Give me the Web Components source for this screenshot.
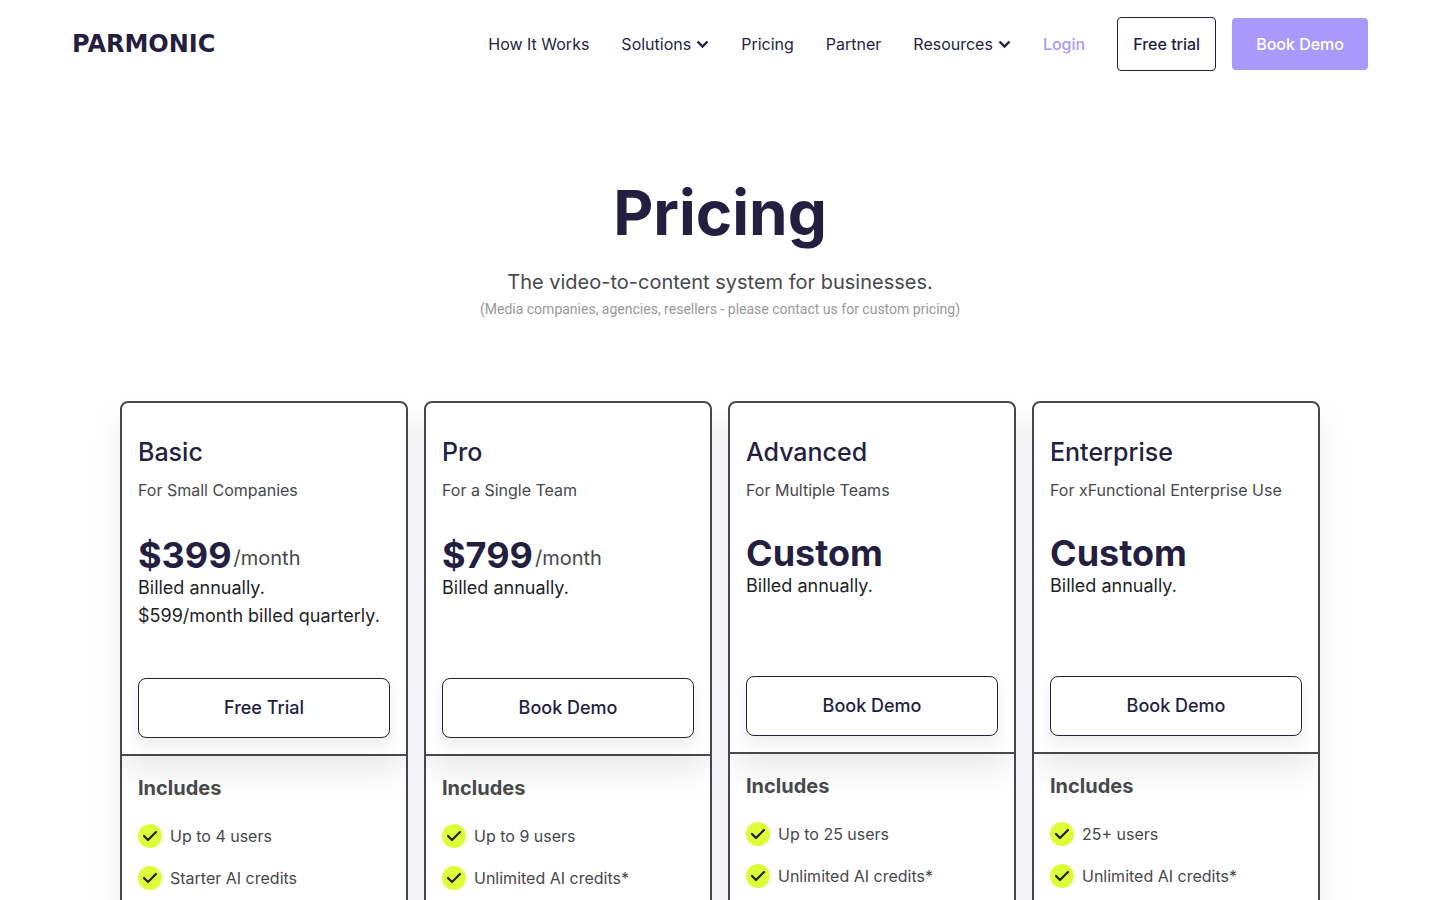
<!DOCTYPE html>
<html lang="en">
<head>
    <meta charset="utf-8">
    <meta name="viewport" content="width=device-width, initial-scale=1">
    <title>Parmonic - Pricing</title>
    <style>
        :root {
            --ink: #241f41;
            --text: #47484c;
            --dark: #1f1f26;
            --accent: #a899fb;
            --lime: #dcff37;
            --muted: #999999;
        }

        body {
            margin: 0;
            background-color: #ffffff;
            color: var(--text);
            font: 16px/24px Inter, "Liberation Sans", sans-serif;
        }
    </style>
</head>
<body>
    <site-header>
        <nav-link href="#how">How It Works</nav-link>
        <nav-menu>Solutions</nav-menu>
        <nav-link href="#pricing">Pricing</nav-link>
        <nav-link href="#partner">Partner</nav-link>
        <nav-menu>Resources</nav-menu>
        <nav-link href="#login" kind="login">Login</nav-link>
        <nav-link href="#trial" kind="outline" slot="actions">Free trial</nav-link>
        <nav-link href="#demo" kind="solid" slot="actions">Book Demo</nav-link>
    </site-header>

    <main>
        <page-intro>
            Pricing
            <span slot="lead">The video-to-content system for businesses.</span>
            <span slot="note">(Media companies, agencies, resellers - please contact us for custom pricing)</span>
        </page-intro>

        <plan-grid>
            <plan-card name="Basic" audience="For Small Companies" price="$399" period="/month" action="Free Trial">
                <span slot="billing">Billed annually.<br>$599/month billed quarterly.</span>
                <plan-feature>Up to 4 users</plan-feature>
                <plan-feature>Starter AI credits</plan-feature>
            </plan-card>
            <plan-card name="Pro" audience="For a Single Team" price="$799" period="/month" action="Book Demo">
                <span slot="billing">Billed annually.</span>
                <plan-feature>Up to 9 users</plan-feature>
                <plan-feature>Unlimited AI credits*</plan-feature>
            </plan-card>
            <plan-card name="Advanced" audience="For Multiple Teams" price="Custom" action="Book Demo">
                <span slot="billing">Billed annually.</span>
                <plan-feature>Up to 25 users</plan-feature>
                <plan-feature>Unlimited AI credits*</plan-feature>
            </plan-card>
            <plan-card name="Enterprise" audience="For xFunctional Enterprise Use" price="Custom" action="Book Demo">
                <span slot="billing">Billed annually.</span>
                <plan-feature>25+ users</plan-feature>
                <plan-feature>Unlimited AI credits*</plan-feature>
            </plan-card>
        </plan-grid>
    </main>

    <script>
        function attach(element, html) {
            const template = document.createElement('template');
            template.innerHTML = html;
            const root = element.attachShadow({ mode: "open" });
            root.appendChild(template.content.cloneNode(true));
            return root;
        }

        class SiteHeader extends HTMLElement {
            constructor() {
                super();
                attach(this, `
                    <style>
                        :host {
                            display: block;
                        }

                        header {
                            display: flex;
                            align-items: center;
                            justify-content: space-between;
                            padding: 17px 72px;
                        }

                        .logo {
                            color: var(--ink);
                            font: bold 24px/32px "DejaVu Sans", sans-serif;
                            text-decoration: none;
                        }

                        nav, .links, .actions {
                            display: flex;
                            align-items: center;
                        }

                        nav, .links {
                            gap: 32px;
                        }

                        .actions {
                            gap: 16px;
                        }
                    </style>
                    <header>
                        <a class="logo" href="#home">PARMONIC</a>
                        <nav>
                            <div class="links"><slot></slot></div>
                            <div class="actions"><slot name="actions"></slot></div>
                        </nav>
                    </header>
                `);
            }
        }

        class NavLink extends HTMLElement {
            constructor() {
                super();
                const root = attach(this, `
                    <style>
                        :host {
                            display: block;
                        }

                        a {
                            display: block;
                            color: var(--ink);
                            text-decoration: none;
                            white-space: nowrap;
                        }

                        :host([kind="login"]) a {
                            color: var(--accent);
                            font-weight: 500;
                        }

                        :host([kind="outline"]) a {
                            padding: 14px 15px;
                            border: 1px solid var(--ink);
                            border-radius: 4px;
                            font-weight: 500;
                        }

                        :host([kind="solid"]) a {
                            padding: 14px 24px;
                            border-radius: 4px;
                            background-color: var(--accent);
                            color: #ffffff;
                            font-weight: 500;
                        }
                    </style>
                    <a><slot></slot></a>
                `);
                root.querySelector('a').href = this.getAttribute('href');
            }
        }

        class NavMenu extends HTMLElement {
            constructor() {
                super();
                attach(this, `
                    <style>
                        :host {
                            display: block;
                        }

                        button {
                            display: flex;
                            align-items: center;
                            gap: 5px;
                            padding: 0;
                            border: 0;
                            background: none;
                            color: var(--ink);
                            font: inherit;
                            cursor: pointer;
                        }
                    </style>
                    <button type="button" aria-haspopup="true">
                        <slot></slot>
                        <svg width="13" height="10" viewBox="0 0 13 10" fill="none" aria-hidden="true">
                            <path d="M1.5 2.5 6.5 7.5 11.5 2.5" stroke="currentColor" stroke-width="2.4"/>
                        </svg>
                    </button>
                `);
            }
        }

        class PageIntro extends HTMLElement {
            constructor() {
                super();
                attach(this, `
                    <style>
                        :host {
                            display: block;
                            padding: 88px 24px 80px;
                            text-align: center;
                        }

                        h1, p {
                            margin: 0;
                        }

                        h1 {
                            color: var(--ink);
                            font-size: 62px;
                            font-weight: 700;
                            line-height: 73px;
                        }

                        .lead {
                            margin-top: 18px;
                            font-size: 20px;
                            line-height: 30px;
                        }

                        .note {
                            color: var(--muted);
                            font: 14px/24px Roboto, sans-serif;
                        }
                    </style>
                    <h1><slot></slot></h1>
                    <p class="lead"><slot name="lead"></slot></p>
                    <p class="note"><slot name="note"></slot></p>
                `);
            }
        }

        class PlanGrid extends HTMLElement {
            constructor() {
                super();
                attach(this, `
                    <style>
                        :host {
                            display: grid;
                            grid-template-columns: repeat(auto-fit, minmax(264px, 1fr));
                            gap: 16px;
                            max-width: 1200px;
                            margin: 0 auto;
                            padding: 0 24px 64px;
                        }
                    </style>
                    <slot></slot>
                `);
            }
        }

        class PlanCard extends HTMLElement {
            constructor() {
                super();
                const root = attach(this, `
                    <style>
                        :host {
                            display: block;
                            border-radius: 8px;
                            box-shadow: 0 16px 32px rgba(36, 31, 65, 0.08);
                        }

                        /* sits above the shadows of the cards next to it */
                        article {
                            position: relative;
                            z-index: 1;
                            box-sizing: border-box;
                            height: 100%;
                            border: 2px solid var(--text);
                            border-radius: 8px;
                            background-color: #ffffff;
                            overflow: hidden;
                        }

                        h2, h3, p {
                            margin: 0;
                        }

                        .head {
                            padding: 32px 16px 16px;
                            border-bottom: 2px solid var(--text);
                            box-shadow: 0 16px 32px -4px rgba(31, 31, 38, 0.11);
                        }

                        h2 {
                            color: var(--ink);
                            font-size: 25px;
                            font-weight: 500;
                            line-height: 35px;
                        }

                        .audience {
                            margin-top: 8px;
                        }

                        .price {
                            display: flex;
                            align-items: flex-end;
                            gap: 2px;
                            margin-top: 32px;
                        }

                        :host([period]) .price {
                            padding-top: 2px;
                        }

                        .amount {
                            color: var(--ink);
                            font-size: 36px;
                            font-weight: 700;
                            line-height: 38px;
                        }

                        .period {
                            font-size: 20px;
                            line-height: 32px;
                        }

                        .billing {
                            min-height: 56px;
                            color: var(--dark);
                            font-size: 18px;
                            line-height: 28px;
                        }

                        button {
                            display: block;
                            width: 100%;
                            margin-top: 48px;
                            padding: 15px;
                            border: 1px solid var(--ink);
                            border-radius: 8px;
                            background-color: #ffffff;
                            box-shadow: 0 8px 16px rgba(31, 31, 38, 0.08);
                            color: var(--ink);
                            font: inherit;
                            font-size: 18px;
                            font-weight: 500;
                            line-height: 28px;
                            cursor: pointer;
                        }

                        .body {
                            padding: 16px 16px 32px;
                        }

                        h3 {
                            font-size: 20px;
                            font-weight: 700;
                            line-height: 32px;
                        }

                        .features {
                            display: grid;
                            gap: 18px;
                            margin-top: 20px;
                        }
                    </style>
                    <article>
                        <div class="head">
                            <h2></h2>
                            <p class="audience"></p>
                            <div class="price">
                                <span class="amount"></span>
                                <span class="period"></span>
                            </div>
                            <p class="billing"><slot name="billing"></slot></p>
                            <button type="button"></button>
                        </div>
                        <div class="body">
                            <h3>Includes</h3>
                            <div class="features" role="list"><slot></slot></div>
                        </div>
                    </article>
                `);
                root.querySelector('h2').textContent = this.getAttribute('name');
                root.querySelector('.audience').textContent = this.getAttribute('audience');
                root.querySelector('.amount').textContent = this.getAttribute('price');
                root.querySelector('button').textContent = this.getAttribute('action');

                // Custom prices have no period
                const period = root.querySelector('.period');
                if (this.hasAttribute('period')) {
                    period.textContent = this.getAttribute('period');
                } else {
                    period.remove();
                }
            }
        }

        class PlanFeature extends HTMLElement {
            constructor() {
                super();
                attach(this, `
                    <style>
                        :host {
                            display: flex;
                            align-items: center;
                            gap: 8px;
                        }

                        svg {
                            flex: none;
                        }

                        circle {
                            fill: var(--lime);
                        }

                        path {
                            stroke: var(--dark);
                        }
                    </style>
                    <svg width="24" height="24" viewBox="0 0 24 24" fill="none" aria-hidden="true">
                        <circle cx="12" cy="12" r="12"/>
                        <path d="M6 12 10 16 18 8" stroke-width="2.2" stroke-linecap="round" stroke-linejoin="round"/>
                    </svg>
                    <span><slot></slot></span>
                `);
            }

            connectedCallback() {
                this.setAttribute('role', 'listitem');
            }
        }

        customElements.define('site-header', SiteHeader);
        customElements.define('nav-link', NavLink);
        customElements.define('nav-menu', NavMenu);
        customElements.define('page-intro', PageIntro);
        customElements.define('plan-grid', PlanGrid);
        customElements.define('plan-card', PlanCard);
        customElements.define('plan-feature', PlanFeature);
    </script>
</body>
</html>
